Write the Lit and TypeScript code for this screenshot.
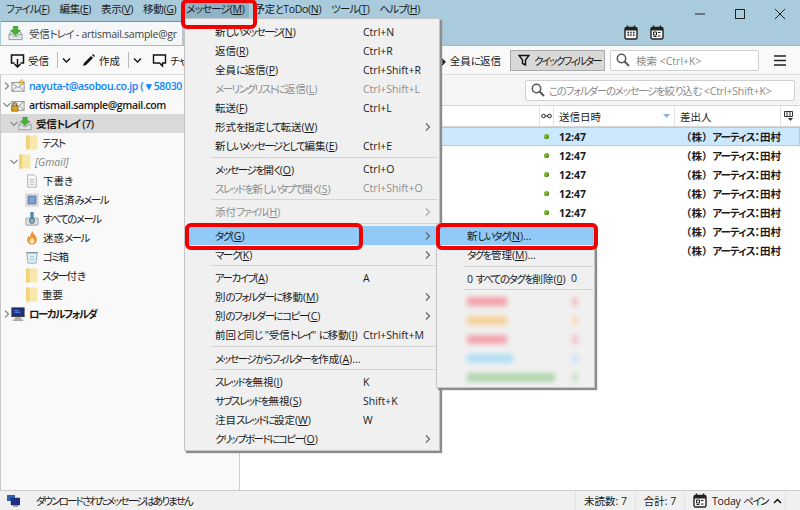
import { LitElement, html, css, svg } from 'lit';
import { customElement } from 'lit/decorators.js';

type MenuEntry = { label?: string; key?: string; off?: boolean; sub?: boolean; hot?: boolean; sep?: boolean };

const MENU_BAR = ['ファイル(_F)', '編集(_E)', '表示(_V)', '移動(_G)', 'メッセージ(_M)', '予定とToDo(_N)', 'ツール(_T)', 'ヘルプ(_H)'];

const MESSAGE_MENU: MenuEntry[] = [
  { label: '新しいメッセージ(_N)', key: 'Ctrl+N' },
  { label: '返信(_R)', key: 'Ctrl+R' },
  { label: '全員に返信(_P)', key: 'Ctrl+Shift+R' },
  { label: 'メーリングリストに返信(_L)', key: 'Ctrl+Shift+L', off: true },
  { label: '転送(_F)', key: 'Ctrl+L' },
  { label: '形式を指定して転送(_W)', sub: true },
  { label: '新しいメッセージとして編集(_E)', key: 'Ctrl+E' },
  { sep: true },
  { label: 'メッセージを開く(_O)', key: 'Ctrl+O' },
  { label: 'スレッドを新しいタブで開く(_S)', key: 'Ctrl+Shift+O', off: true },
  { sep: true },
  { label: '添付ファイル(_H)', off: true, sub: true },
  { sep: true },
  { label: 'タグ(_G)', sub: true, hot: true },
  { label: 'マーク(_K)', sub: true },
  { sep: true },
  { label: 'アーカイブ(_A)', key: 'A' },
  { label: '別のフォルダーに移動(_M)', sub: true },
  { label: '別のフォルダーにコピー(_C)', sub: true },
  { label: '前回と同じ "受信トレイ" に移動(_I)', key: 'Ctrl+Shift+M' },
  { sep: true },
  { label: 'メッセージからフィルターを作成(_A)...' },
  { sep: true },
  { label: 'スレッドを無視(_I)', key: 'K' },
  { label: 'サブスレッドを無視(_S)', key: 'Shift+K' },
  { label: '注目スレッドに設定(_W)', key: 'W' },
  { label: 'クリップボードにコピー(_O)', sub: true },
];

const BLURRED_TAGS = [
  { color: '#f58f98', width: 40 },
  { color: '#f6c987', width: 40 },
  { color: '#f5929c', width: 40 },
  { color: '#a5dcf8', width: 46 },
  { color: '#a3cf9f', width: 88 },
];

const envelope = svg`<rect x="1" y="4" width="14" height="10" fill="#eceff1" stroke="#8c8c8c"/><path d="M1 4l7 6 7-6M1 14l5-5M15 14l-5-5" fill="none" stroke="#8c8c8c"/>`;

const icons = {
  inbox: svg`<path d="M1 9l3-4h8l3 4v5.500H1z" fill="#e4e7ea" stroke="#8f989f"/><path d="M1 9h4l1 2h4l1-2h4" fill="none" stroke="#8f989f"/><path d="M5.500 0h5v4.500h3L8 10 2.500 4.500h3z" fill="#4caf3c" stroke="#2f8a25" stroke-width=".5"/>`,
  draft: svg`<path d="M3 1h7l3 3v11H3z" fill="#fafafa" stroke="#a9a9a9"/><path d="M5 6h6M5 8h6M5 10h6M5 12h6" stroke="#c2c2c2"/>`,
  sent: svg`<rect x="1" y="1" width="14" height="14" fill="#e3e3e3" stroke="#b0b0b0" stroke-dasharray="1 1"/><rect x="3.500" y="3.500" width="9" height="9" fill="#7b9fd0" stroke="#55779f"/>`,
  all: svg`<rect x="1" y="7" width="14" height="8" rx="1" fill="#dfe3e6" stroke="#8f989f"/><rect x="6" y="0" width="4" height="8" fill="#4c8fb5"/><circle cx="8" cy="10" r="3" fill="#8fb0c6" stroke="#50697a"/>`,
  junk: svg`<path d="M8.500 0c.5 3 5 5.500 5 10a5.500 5.500 0 0 1-11 0c0-2.500 1-3.500 2.200-5 0 1.200.3 2.200 1 2.500C5.700 5 7 2.500 8.500 0z" fill="#ee9435"/><path d="M8 7.500c1 1 2.800 2.200 2.800 4a2.800 2.800 0 0 1-5.600 0c0-2 1.800-2.500 2.800-4z" fill="#fce6b8"/>`,
  trash: svg`<path d="M2 3h12l-1.500 12h-9z" fill="#dff0f7" stroke="#93a5ad"/><path d="M1.500 3h13" stroke="#7f929b" stroke-width="1.500"/><path d="M6 9l2-2 2 2M6 11h4" stroke="#76b4d0" fill="none"/>`,
  local: svg`<rect x="1" y="1" width="14" height="10" fill="#1d2f86" stroke="#333"/><path d="M4 4h4M4 6h7" stroke="#6f9cf0"/><path d="M5 12h6l1 2H4z" fill="#9a9a9a"/><path d="M2 15h12" stroke="#666"/>`,
  accountStar: svg`${envelope}<path d="M12 0l1 2.200 2.300.3-1.700 1.600.5 2.300-2.100-1.200-2.100 1.200.5-2.300-1.700-1.600 2.300-.3z" fill="#f2c230" stroke="#c79a1c" stroke-width=".4"/>`,
  accountLock: svg`${envelope}<path d="M2.500 9V7.500a2 2 0 0 1 4 0V9" fill="none" stroke="#7a5a10" stroke-width="1.200"/><rect x="1" y="9" width="7" height="6" fill="#d9a520" stroke="#7a5a10" stroke-width=".8"/>`,
};

function icon(name: keyof typeof icons, size = 14) {
  return html`<svg class="ic" width=${size} height=${size} viewBox="0 0 16 16">${icons[name]}</svg>`;
}

const folder = html`<svg class="ic" width="13" height="15" viewBox="0 0 13 15">
  <path d="M1 1.500Q1 .5 2 .5h9.500Q12.500 .5 12.500 1.500V14.500H1z" fill="#f8e7ab"/>
  <path d="M1 1.500Q1 .5 2 .5h2.500V14.500H1z" fill="#efd27a"/>
</svg>`;

// メイリオUI のかなは幅が狭いので、かなの連続だけ字間を詰める
function jp(text: string) {
  return text.split(/([\u3040-\u30ff]+)/).map((part, i) => (i % 2 ? html`<span class="k">${part}</span>` : part));
}

// 「(_N)」の _ の次の一文字がアクセスキーで下線付き
function mnemonic(label: string) {
  const at = label.indexOf('_');
  if (at < 0) return jp(label);
  return html`${jp(label.slice(0, at))}<u>${label[at + 1]}</u>${label.slice(at + 2)}`;
}

const chevron = (open: boolean) => html`<svg class="chev" width="8" height="8" viewBox="0 0 8 8">
  <path d=${open ? 'M0.500 2l3.500 3.500L7.500 2' : 'M2 0.500L5.500 4 2 7.500'} fill="none" stroke="#8a8a8a" stroke-width="1.200"/>
</svg>`;

const glass = html`<svg width="14" height="14" viewBox="0 0 14 14"><circle cx="5.500" cy="5.500" r="4.200" fill="none" stroke="#555" stroke-width="1.500"/><path d="M8.500 8.500l4.500 4.500" stroke="#555" stroke-width="2"/></svg>`;

const calendar = (label: string) => html`<svg width="14" height="15" viewBox="0 0 14 15">
  <rect x="1" y="2.500" width="12" height="11.500" rx="1.500" fill="#f4f4f4" stroke="#222" stroke-width="1.400"/>
  <path d="M1 3h12v2.500H1z" fill="#222"/><path d="M3.500 .5v3M10.500 .5v3" stroke="#222" stroke-width="1.400"/>
  ${label === 'dots'
    ? svg`<path d="M3.500 7.500h1.500M6.200 7.500h1.500M9 7.500h1.500M3.500 10h1.500M6.200 10h1.500M9 10h1.500" stroke="#222" stroke-width="1.300"/>`
    : svg`<path d="M3.500 7h3v3h-3zM8 7.500h2.500M8 11h2.500M3.500 11.500h3" fill="none" stroke="#222"/>`}
</svg>`;

@customElement('app-root')
export class AppRoot extends LitElement {
  static styles = css`
    :host {
      display: flex;
      flex-direction: column;
      position: relative;
      width: 800px;
      height: 510px;
      overflow: hidden;
      background: #f9f9fa;
      color: #1a1a1a;
      font-family: "Open Sans", "Noto Sans CJK JP", sans-serif;
      font-size: 10.5px;
      font-feature-settings: "palt";
    }
    svg { display: block; flex: none; }
    u { text-underline-offset: 1px; }
    .k { letter-spacing: -0.9px; }

    .title { display: flex; height: 45px; background: #a9cbdc; flex: none; }
    .title-left { flex: 1; display: flex; flex-direction: column; }
    .menubar { display: flex; height: 20px; padding: 1px 0 0 1px; align-items: stretch; letter-spacing: -0.3px; }
    .menubar span.mb { padding: 0 5px; line-height: 17px; height: 17px; }
    .menubar span.active { background: #8fb3c6; }
    .tabs { flex: 1; display: flex; align-items: flex-end; }
    .tab {
      width: 182px;
      height: 24px;
      margin-left: 1px;
      background: #f5f6f7;
      border-top: 1px solid #5b9bd5;
      box-sizing: border-box;
      border-right: 1px solid #b9c6ce;
      display: flex;
      align-items: center;
      gap: 6px;
      padding-left: 7px;
      white-space: nowrap;
      overflow: hidden;
      color: #444;
      letter-spacing: -0.25px;
    }
    .cals { display: flex; gap: 12px; margin: 0 0 5px auto; padding-right: 16px; }
    .controls { width: 120px; display: flex; height: 27px; align-items: center; gap: 30px; padding-left: 15px; box-sizing: border-box; }

    .toolbar {
      flex: none;
      height: 30px;
      box-sizing: border-box;
      border-top: 1px solid #9fbccb;
      border-bottom: 1px solid #dcdcdc;
      display: flex;
      align-items: center;
      padding-left: 10px;
      white-space: nowrap;
    }
    .tb { display: flex; align-items: center; gap: 3px; }
    .tb-sep { width: 1px; height: 16px; background: #bbb; margin: 0 4px 0 8px; }
    .tb-drop { margin-right: 10px; }
    .tb-right { margin-left: auto; display: flex; align-items: center; padding-right: 14px; }
    .qf {
      width: 95px;
      height: 21px;
      box-sizing: border-box;
      margin-left: 9px;
      padding-left: 7px;
      background: #d8d8d8;
      border: 1px solid #a9a9a9;
      display: flex;
      align-items: center;
      gap: 4px;
    }
    .qf .k { letter-spacing: -1.7px; }
    .search {
      display: flex;
      align-items: center;
      gap: 6px;
      box-sizing: border-box;
      background: #fff;
      border: 1px solid #d0d0d0;
      border-radius: 2px;
      color: #8a8a8a;
      height: 21px;
      padding-left: 5px;
      white-space: nowrap;
    }
    .tb-search { width: 149px; margin: 0 15px 0 5px; }

    .main { flex: 1; display: flex; min-height: 0; }
    .folders { width: 240px; flex: none; box-sizing: border-box; border-right: 1px solid #c9ced2; padding-top: 1px; background: #f9f9f9; border-left: 1px solid #c8c8c8; }
    .f-row { height: 19px; display: flex; align-items: center; gap: 4px; white-space: nowrap; overflow: hidden; }
    .f-row .k { letter-spacing: -1.5px; }
    .f-row .chev { margin-right: -4px; }
    .f-row.sel { background: #d9d9d9; }
    .f-row.strong { font-weight: 600; letter-spacing: -0.35px; }
    .f-row.gmail { font-style: italic; color: #808080; }
    .f-row.blue { color: #0a84ff; font-weight: 600; letter-spacing: -0.35px; }

    .d0 { padding-left: 2px; }
    .d1 { padding-left: 9px; }
    .d2 { padding-left: 24px; }

    .thread { flex: 1; display: flex; flex-direction: column; background: #fff; min-width: 0; }
    .filter { height: 31px; flex: none; background: #f5f5f5; display: flex; align-items: center; justify-content: flex-end; padding-right: 5px; box-sizing: border-box; border-bottom: 1px solid #d5d5d5; }
    .filter .search { width: 270px; gap: 4px; letter-spacing: -0.15px; }
    .filter .k { letter-spacing: -1.3px; }
    .cols { display: grid; grid-template-columns: 300px 14px 121px 106px 18px; }
    .head { height: 21px; box-sizing: border-box; border-bottom: 1px solid #d5d5d5; }
    .head > div { border-right: 1px solid #e2e2e2; display: flex; align-items: center; padding-left: 5px; justify-content: space-between; padding-right: 4px; box-sizing: border-box; }
    .head > div:last-child { border: none; padding: 0 3px; }
    .head > div:nth-child(2) { padding: 0; justify-content: center; }
    .row { height: 19px; align-items: center; font-weight: 600; box-sizing: border-box; border: 1px solid transparent; border-left: none; }
    .row.sel { background: #cce8ff; border-color: #99d1ff; }
    .dot { width: 5px; height: 5px; border-radius: 50%; background: #7cb82f; margin-left: 4px; box-shadow: inset -1px -1px 1px #4e8a14; }
    .time { padding-left: 5px; font-weight: 700; }
    .from { padding-left: 6px; white-space: nowrap; grid-column: span 2; }
    .paren { font-feature-settings: normal; }

    .status { height: 20px; flex: none; box-sizing: border-box; border-top: 1px solid #ccc; background: #f0f0f0; display: flex; align-items: center; }
    .st-msg { padding-left: 7px; display: flex; align-items: center; gap: 16px; flex: 1; }
    .st-msg .k { letter-spacing: -1.9px; }
    .st-cell { height: 100%; display: flex; align-items: center; justify-content: center; border-left: 1px solid #e2e2e2; }
    .st-unread { width: 59px; }
    .st-total { width: 48px; }
    .st-today { width: 101px; gap: 5px; justify-content: flex-start; padding-left: 8px; box-sizing: border-box; letter-spacing: -0.2px; }
    .st-today .k { letter-spacing: -1.5px; }
    .st-grip { width: 15px; height: 100%; border-left: 1px solid #e2e2e2; box-sizing: border-box; }

    /* ここから下はウィンドウの上に重なるポップアップ */
    .menu {
      position: absolute;
      background: #f0f0f0;
      border: 1px solid #c6c6c6;
      box-shadow: 2px 2px 1px #8c8c8c;
      box-sizing: border-box;
    }
    .menu .k { letter-spacing: -1.5px; }
    .msg-menu { left: 184px; top: 18px; width: 256px; height: 433px; padding-top: 3px; }
    .tag-menu { left: 436px; top: 223px; width: 159px; height: 165px; padding-top: 2px; }
    .item { height: 19px; display: flex; align-items: center; padding-left: 30px; white-space: pre; position: relative; }
    .item.off { color: #8d8d8d; }
    .item.hot { background: #91c9f7; }
    .item .key { position: absolute; left: 178px; }
    .item .arrow { position: absolute; right: 8px; top: 6px; }
    .sep { height: 4.500px; display: flex; align-items: center; padding: 0 1px 0 26px; box-sizing: border-box; }
    .sep::after { content: ""; flex: 1; height: 1px; background: #d4d4d4; }
    .tag-menu .item .key { left: 134px; }
    .blot { height: 9px; filter: blur(2.500px); opacity: 0.8; }
    .blot-key { position: absolute; left: 135px; top: 5px; width: 6px; height: 9px; filter: blur(2.500px); opacity: 0.5; }

    .mark { position: absolute; border: 4px solid #f00000; border-radius: 6px; box-sizing: border-box; }
    .m1 { left: 181px; top: -1px; width: 76px; height: 30px; }
    .m2 { left: 185px; top: 223px; width: 178px; height: 27px; }
    .m3 { left: 436px; top: 223px; width: 162px; height: 27px; }
  `;

  private renderMenu(entries: MenuEntry[]) {
    return entries.map((e) => {
      if (e.sep) return html`<div class="sep"></div>`;
      return html`<div class="item ${e.off ? 'off' : ''} ${e.hot ? 'hot' : ''}"><span>${mnemonic(e.label ?? '')}</span>${e.key ? html`<span class="key">${e.key}</span>` : ''}${e.sub ? html`<svg class="arrow" width="6" height="8" viewBox="0 0 6 8"><path d="M1 .5L4.500 4 1 7.500" fill="none" stroke=${e.off ? '#aaa' : '#666'} stroke-width="1.200"/></svg>` : ''}</div>`;
    });
  }

  render() {
    const rows = [0, 1, 2, 3, 4, 5, 6];
    return html`
      <div class="title">
        <div class="title-left">
          <div class="menubar">
            ${MENU_BAR.map((m) => html`<span class="mb ${m.startsWith('メッセージ') ? 'active' : ''}">${mnemonic(m)}</span>`)}
          </div>
          <div class="tabs">
            <div class="tab">${icon('inbox', 15)}<span>${jp('受信トレイ - artismail.sample@gr')}</span></div>
            <div class="cals">${calendar('dots')}${calendar('list')}</div>
          </div>
        </div>
        <div class="controls">
          <svg width="10" height="10" viewBox="0 0 10 10"><path d="M0 5h10" stroke="#222"/></svg>
          <svg width="10" height="10" viewBox="0 0 10 10"><rect x=".5" y=".5" width="9" height="9" fill="none" stroke="#222"/></svg>
          <svg width="10" height="10" viewBox="0 0 10 10"><path d="M0 0l10 10M10 0L0 10" stroke="#222"/></svg>
        </div>
      </div>

      <div class="toolbar">
        <div class="tb">
          <svg width="15" height="15" viewBox="0 0 15 15"><path d="M4.500 10H1.500V2h12v8h-3M7.500 6v8M4.500 11l3 3 3-3" fill="none" stroke="#111" stroke-width="1.500"/></svg>受信
        </div>
        <div class="tb-sep"></div>
        <svg class="tb-drop" width="9" height="9" viewBox="0 0 9 9"><path d="M1 2.500l3.500 3.500 3.500-3.500" fill="none" stroke="#111" stroke-width="1.400"/></svg>
        <div class="tb">
          <svg width="15" height="15" viewBox="0 0 15 15"><path d="M2 13l1-3 7-7 2 2-7 7zM11 2l1-1 2 2-1 1z" fill="#111"/></svg>作成
        </div>
        <div class="tb-sep"></div>
        <svg class="tb-drop" width="9" height="9" viewBox="0 0 9 9"><path d="M1 2.500l3.500 3.500 3.500-3.500" fill="none" stroke="#111" stroke-width="1.400"/></svg>
        <div class="tb">
          <svg width="15" height="15" viewBox="0 0 15 15"><path d="M1.500 2h12v8h-3v3l-3-3h-6z" fill="none" stroke="#111" stroke-width="1.400"/></svg><span>${jp('チャット')}</span>
        </div>
        <div class="tb-right">
          <div class="tb">
            <svg width="10" height="12" viewBox="0 0 10 12"><path d="M1 2v3a3 3 0 0 0 3 3h3M3 1L1 3M5 5l3 3-3 3" fill="none" stroke="#111" stroke-width="1.300"/></svg><span>${jp('全員に返信')}</span>
          </div>
          <div class="qf">
            <svg width="12" height="12" viewBox="0 0 12 12"><path d="M1 1.500h10L7.500 6v5l-3-1.500V6z" fill="none" stroke="#111" stroke-width="1.400"/></svg><span>${jp('クイックフィルター')}</span>
          </div>
          <div class="search tb-search">${glass}<span>検索 &lt;Ctrl+K&gt;</span></div>
          <svg width="12" height="11" viewBox="0 0 12 11"><path d="M0 1h12M0 5.500h12M0 10h12" stroke="#222" stroke-width="1.500"/></svg>
        </div>
      </div>

      <div class="main">
        <div class="folders">
          <div class="f-row d0 blue">${chevron(false)}${icon('accountStar')}<span>nayuta-t@asobou.co.jp ( ▾ 58030 )</span></div>
          <div class="f-row d0 strong">${chevron(true)}${icon('accountLock')}<span>artismail.sample@gmail.com</span></div>
          <div class="f-row d1 sel strong">${chevron(true)}${icon('inbox')}<span>${jp('受信トレイ (7)')}</span></div>
          <div class="f-row d2">${folder}<span>${jp('テスト')}</span></div>
          <div class="f-row d1 gmail">${chevron(true)}${folder}<span>[Gmail]</span></div>
          <div class="f-row d2">${icon('draft')}<span>${jp('下書き')}</span></div>
          <div class="f-row d2">${icon('sent')}<span>${jp('送信済みメール')}</span></div>
          <div class="f-row d2">${icon('all')}<span>${jp('すべてのメール')}</span></div>
          <div class="f-row d2">${icon('junk')}<span>${jp('迷惑メール')}</span></div>
          <div class="f-row d2">${icon('trash')}<span>${jp('ゴミ箱')}</span></div>
          <div class="f-row d2">${folder}<span>${jp('スター付き')}</span></div>
          <div class="f-row d2">${folder}<span>重要</span></div>
          <div class="f-row d0 strong">${chevron(false)}${icon('local')}<span>${jp('ローカルフォルダ')}</span></div>
        </div>

        <div class="thread">
          <div class="filter">
            <div class="search">${glass}<span>${jp('このフォルダーのメッセージを絞り込む')} &lt;Ctrl+Shift+K&gt;</span></div>
          </div>
          <div class="cols head">
            <div></div>
            <div><svg width="11" height="6" viewBox="0 0 11 6"><circle cx="2.500" cy="3" r="1.800" fill="none" stroke="#222"/><circle cx="8.500" cy="3" r="1.800" fill="none" stroke="#222"/><path d="M4 3h3" stroke="#222"/></svg></div>
            <div><span>送信日時</span><svg width="7" height="4" viewBox="0 0 7 4"><path d="M0 0h7L3.500 4z" fill="#8ab4d6"/></svg></div>
            <div>差出人</div>
            <div><svg width="10" height="10" viewBox="0 0 10 10"><path d="M.5 .5h8v5h-8zM3 .5v5M6 .5v5" fill="none" stroke="#333"/><path d="M4 7h5L6.500 10z" fill="#333"/></svg></div>
          </div>
          ${rows.map((i) => html`
            <div class="cols row ${i === 0 ? 'sel' : ''}">
              <div></div>
              <div class="dot"></div>
              <div class="time">12:47</div>
              <div class="from"><span class="paren">（株）</span>${jp('アーティス：田村')}</div>
            </div>`)}
        </div>
      </div>

      <div class="status">
        <div class="st-msg">
          <svg width="13" height="12" viewBox="0 0 13 12"><rect x="0" y="0" width="8" height="6" fill="#2b5fb3"/><rect x="4" y="3" width="9" height="7" fill="#1d2f86" stroke="#333" stroke-width=".5"/><path d="M6 11h5" stroke="#666"/></svg>
          <span>${jp('ダウンロードされたメッセージはありません')}</span>
        </div>
        <div class="st-cell st-unread">未読数: 7</div>
        <div class="st-cell st-total">合計: 7</div>
        <div class="st-cell st-today">
          ${calendar('list')}<span>Today ${jp('ペイン')}</span>
          <svg width="9" height="6" viewBox="0 0 9 6"><path d="M1 5l3.500-3.500L8 5" fill="none" stroke="#111" stroke-width="1.500"/></svg>
        </div>
        <div class="st-grip"></div>
      </div>

      <div class="menu msg-menu">${this.renderMenu(MESSAGE_MENU)}</div>
      <div class="menu tag-menu">
        <div class="item hot"><span>${mnemonic('新しいタグ(_N)...')}</span></div>
        <div class="item"><span>${mnemonic('タグを管理(_M)...')}</span></div>
        <div class="sep"></div>
        <div class="item"><span>0 ${mnemonic('すべてのタグを削除(_0)')}</span><span class="key">0</span></div>
        <div class="sep"></div>
        ${BLURRED_TAGS.map((t) => html`
          <div class="item">
            <div class="blot" style="width:${t.width}px;background:${t.color}"></div>
            <div class="blot-key" style="background:${t.color}"></div>
          </div>`)}
      </div>

      <div class="mark m1"></div>
      <div class="mark m2"></div>
      <div class="mark m3"></div>
    `;
  }
}
